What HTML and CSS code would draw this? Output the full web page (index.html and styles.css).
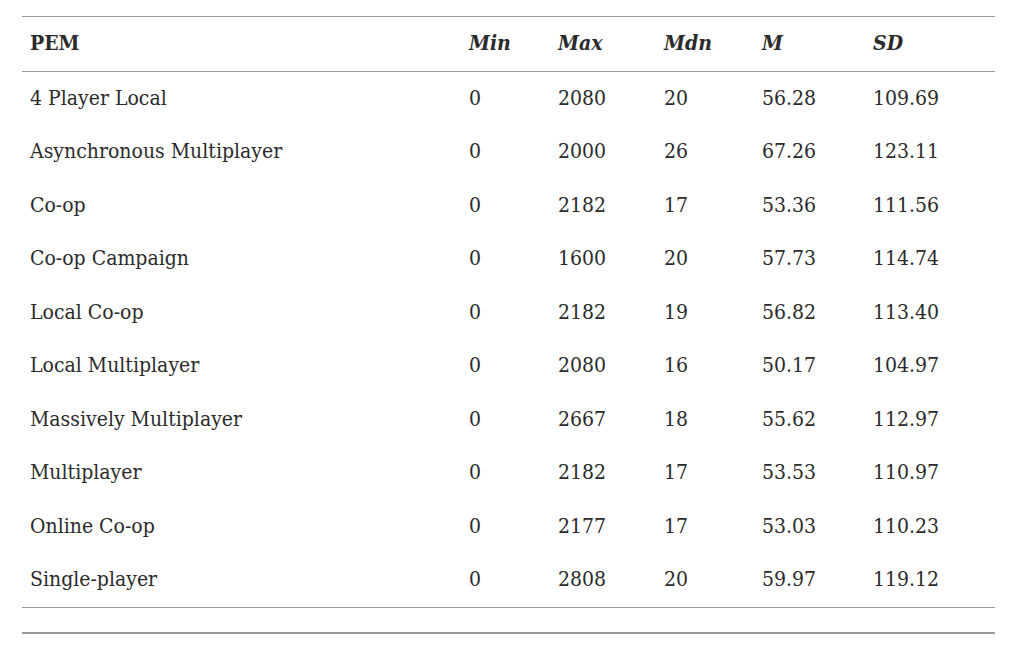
FILE: index.html
```html
<!DOCTYPE html>
<html>
<head>
<meta charset="utf-8">
<link rel="stylesheet" href="styles.css">
</head>
<body>
<div class="wrap">
<table class="stats">
<colgroup>
<col class="c-pem"><col class="c-min"><col class="c-max"><col class="c-mdn"><col class="c-m"><col class="c-sd">
</colgroup>
<thead>
<tr><th class="pem">PEM</th><th><i>Min</i></th><th><i>Max</i></th><th><i>Mdn</i></th><th><i>M</i></th><th><i>SD</i></th></tr>
</thead>
<tbody>
<tr><td>4 Player Local</td><td>0</td><td>2080</td><td>20</td><td>56.28</td><td>109.69</td></tr>
<tr><td>Asynchronous Multiplayer</td><td>0</td><td>2000</td><td>26</td><td>67.26</td><td>123.11</td></tr>
<tr><td>Co-op</td><td>0</td><td>2182</td><td>17</td><td>53.36</td><td>111.56</td></tr>
<tr><td>Co-op Campaign</td><td>0</td><td>1600</td><td>20</td><td>57.73</td><td>114.74</td></tr>
<tr><td>Local Co-op</td><td>0</td><td>2182</td><td>19</td><td>56.82</td><td>113.40</td></tr>
<tr><td>Local Multiplayer</td><td>0</td><td>2080</td><td>16</td><td>50.17</td><td>104.97</td></tr>
<tr><td>Massively Multiplayer</td><td>0</td><td>2667</td><td>18</td><td>55.62</td><td>112.97</td></tr>
<tr><td>Multiplayer</td><td>0</td><td>2182</td><td>17</td><td>53.53</td><td>110.97</td></tr>
<tr><td>Online Co-op</td><td>0</td><td>2177</td><td>17</td><td>53.03</td><td>110.23</td></tr>
<tr><td>Single-player</td><td>0</td><td>2808</td><td>20</td><td>59.97</td><td>119.12</td></tr>
</tbody>
</table>
<div class="foot"></div>
</div>
</body>
</html>
```

FILE: styles.css
```css
html, body {
  margin: 0;
  padding: 0;
  background: #fff;
}
.wrap {
  padding: 16px 29px 0 22px;
  width: 973px;
}
.stats {
  width: 973px;
  border-collapse: collapse;
  table-layout: fixed;
  font-family: "DejaVu Serif Condensed", "DejaVu Serif", serif;
  font-stretch: condensed;
  font-size: 21px;
  line-height: 24px;
  color: #2b2b2b;
}
.c-pem { width: 439px; }
.c-min { width: 89px; }
.c-max { width: 106px; }
.c-mdn { width: 98px; }
.c-m { width: 111px; }
.c-sd { width: 130px; }
.stats thead tr {
  border-top: 1px solid #9a9a9a;
  border-bottom: 1px solid #9a9a9a;
}
.stats th {
  height: 52px;
  padding: 0 0 2px 8px;
  text-align: left;
  font-weight: bold;
  vertical-align: middle;
}
.stats td {
  height: 51.5px;
  padding: 0 0 2px 8px;
  text-align: left;
  vertical-align: middle;
}
.stats tbody tr:last-child {
  border-bottom: 1px solid #9a9a9a;
}
.foot {
  margin-top: 24px;
  border-top: 2px solid #9a9a9a;
  width: 973px;
}
```
